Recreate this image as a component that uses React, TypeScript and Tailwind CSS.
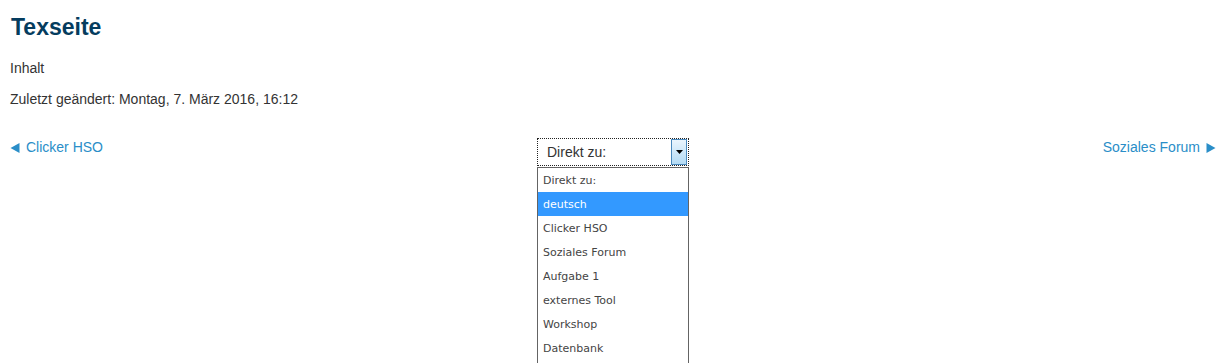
import React from "react";

const items = [
  "Direkt zu:",
  "deutsch",
  "Clicker HSO",
  "Soziales Forum",
  "Aufgabe 1",
  "externes Tool",
  "Workshop",
  "Datenbank",
];

function LeftTri() {
  return (
    <svg width="10" height="10" viewBox="0 0 10 10" className="inline-block mr-[6px] align-[-1px]">
      <polygon points="0.5,5 9.5,0 9.5,10" fill="currentColor" />
    </svg>
  );
}

function RightTri() {
  return (
    <svg width="10" height="10" viewBox="0 0 10 10" className="inline-block ml-[6px] align-[-1px]">
      <polygon points="9.5,5 0.5,0 0.5,10" fill="currentColor" />
    </svg>
  );
}

export default function App() {
  return (
    <div className="w-[1229px] h-[363px] overflow-hidden bg-white pl-[10px] pr-[13px] font-['Liberation_Sans',Arial,sans-serif] text-[#333]">
      <h2 className="pt-[14px] pl-[1px] text-[23px] leading-[26px] font-bold text-[#053c5e]">Texseite</h2>
      <p className="mt-[20px] text-[14px] leading-[16px]">Inhalt</p>
      <p className="mt-[15px] text-[14px] leading-[16px]">Zuletzt geändert: Montag, 7. März 2016, 16:12</p>
      <div className="mt-[31px] grid grid-cols-[1fr_auto_1fr] items-start text-[14px] leading-[16px]">
        <div>
          <a className="mt-[1px] inline-block text-[#2a8ec8] cursor-pointer">
            <LeftTri />
            Clicker HSO
          </a>
        </div>
        <div className="relative w-[152px]">
          <div className="flex h-[28px] border border-dotted border-[#222] bg-white">
            <span className="flex-1 pl-[9px] leading-[26px] text-[#333]">Direkt zu:</span>
            <span className="mr-[1px] flex w-[16px] items-center justify-center border border-[#4a89bd] bg-gradient-to-b from-[#eaf5fd] to-[#b3dbf5]">
              <svg width="7" height="4" viewBox="0 0 7 4">
                <polygon points="0,0 7,0 3.5,4" fill="#000" />
              </svg>
            </span>
          </div>
          <div className="absolute left-0 top-[29px] w-[152px] border border-[#646464] bg-white font-['DejaVu_Sans',Tahoma,sans-serif] text-[11px] text-[#444]">
            {items.map((it, i) => (
              <div
                key={it}
                className={
                  i === 1
                    ? "h-[24px] pl-[5px] pt-[1px] leading-[24px] bg-[#3399ff] text-white"
                    : "h-[24px] pl-[5px] pt-[1px] leading-[24px]"
                }
              >
                {it}
              </div>
            ))}
            <div className="h-[48px]" />
          </div>
        </div>
        <div className="text-right">
          <a className="mt-[1px] inline-block text-[#2a8ec8] cursor-pointer">
            Soziales Forum
            <RightTri />
          </a>
        </div>
      </div>
    </div>
  );
}
